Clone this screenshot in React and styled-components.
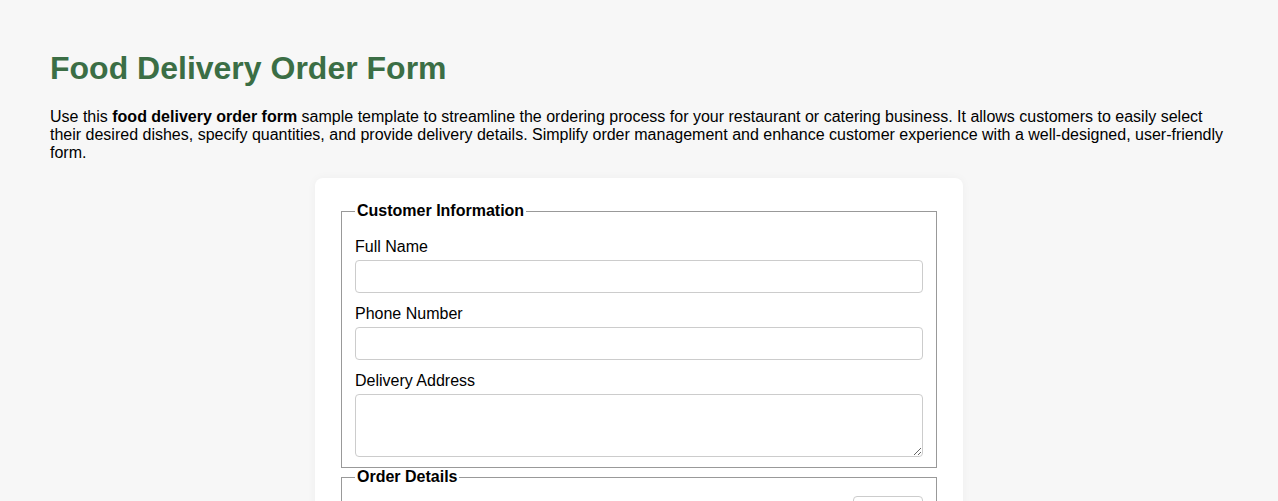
import React from "react";
import styled, { createGlobalStyle } from "styled-components";

const GlobalStyle = createGlobalStyle`
    html, body {
        margin: 0;
        padding: 0;
        background: #f7f7f7;
        font-family: "Liberation Sans", Arial, sans-serif;
        color: #000;
    }
`;

export default function App() {
    return (
        <>
            <GlobalStyle />
            <Page>
                <Title>Food Delivery Order Form</Title>
                <Intro>
                    Use this <strong>food delivery order form</strong> sample
                    template to streamline the ordering process for your
                    restaurant or catering business. It allows customers to
                    easily select their desired dishes, specify quantities, and
                    provide delivery details. Simplify order management and
                    enhance customer experience with a well-designed,
                    user-friendly form.
                </Intro>
                <Card>
                    <Fieldset>
                        <Legend>Customer Information</Legend>
                        <Label htmlFor="name">Full Name</Label>
                        <Input id="name" type="text" />
                        <Label htmlFor="phone">Phone Number</Label>
                        <Input id="phone" type="tel" />
                        <Label htmlFor="address">Delivery Address</Label>
                        <TextArea id="address" />
                    </Fieldset>
                    <Fieldset>
                        <Legend>Order Details</Legend>
                        <DishRow>
                            <DishName>Margherita Pizza</DishName>
                            <Qty type="number" min="0" defaultValue="0" />
                        </DishRow>
                        <DishRow>
                            <DishName>Chicken Caesar Salad</DishName>
                            <Qty type="number" min="0" defaultValue="0" />
                        </DishRow>
                    </Fieldset>
                </Card>
            </Page>
        </>
    );
}

const Page = styled.div`
    padding: 30px 50px 40px;
`;

const Title = styled.h1`
    margin: 20px 0 21px;
    font-size: 32px;
    font-weight: bold;
    color: #3b6e45;
`;

const Intro = styled.p`
    margin: 0 0 16px;
    font-size: 16px;
    line-height: 18px;
`;

const Card = styled.form`
    box-sizing: border-box;
    width: 648px;
    margin: 0 auto;
    padding: 24px;
    background: #fff;
    border-radius: 8px;
    box-shadow: 0 0 10px rgba(0, 0, 0, 0.04);
`;

const Fieldset = styled.fieldset`
    margin: 0 2px;
    padding: 0 13px 10px;
    border: 1px solid #999;
`;

const Legend = styled.legend`
    padding: 0 2px;
    font-size: 16px;
    font-weight: bold;
    line-height: 18px;
`;

const Label = styled.label`
    display: block;
    margin: 12px 0 4px;
    font-size: 16px;
    line-height: 18px;
    &:first-of-type {
        margin-top: 18px;
    }
`;

const Input = styled.input`
    box-sizing: border-box;
    display: block;
    width: 100%;
    height: 33px;
    padding: 8px;
    border: 1px solid #ccc;
    border-radius: 4px;
    font-family: inherit;
    font-size: 16px;
`;

const TextArea = styled.textarea`
    box-sizing: border-box;
    display: block;
    width: 100%;
    height: 63px;
    padding: 8px;
    border: 1px solid #ccc;
    border-radius: 4px;
    font-family: inherit;
    font-size: 16px;
`;

const DishRow = styled.div`
    display: flex;
    align-items: center;
    justify-content: space-between;
    margin-top: 10px;
`;

const DishName = styled.span`
    font-size: 16px;
`;

const Qty = styled.input`
    box-sizing: border-box;
    width: 70px;
    height: 33px;
    padding: 8px;
    border: 1px solid #ccc;
    border-radius: 4px;
    font-family: inherit;
    font-size: 16px;
`;
